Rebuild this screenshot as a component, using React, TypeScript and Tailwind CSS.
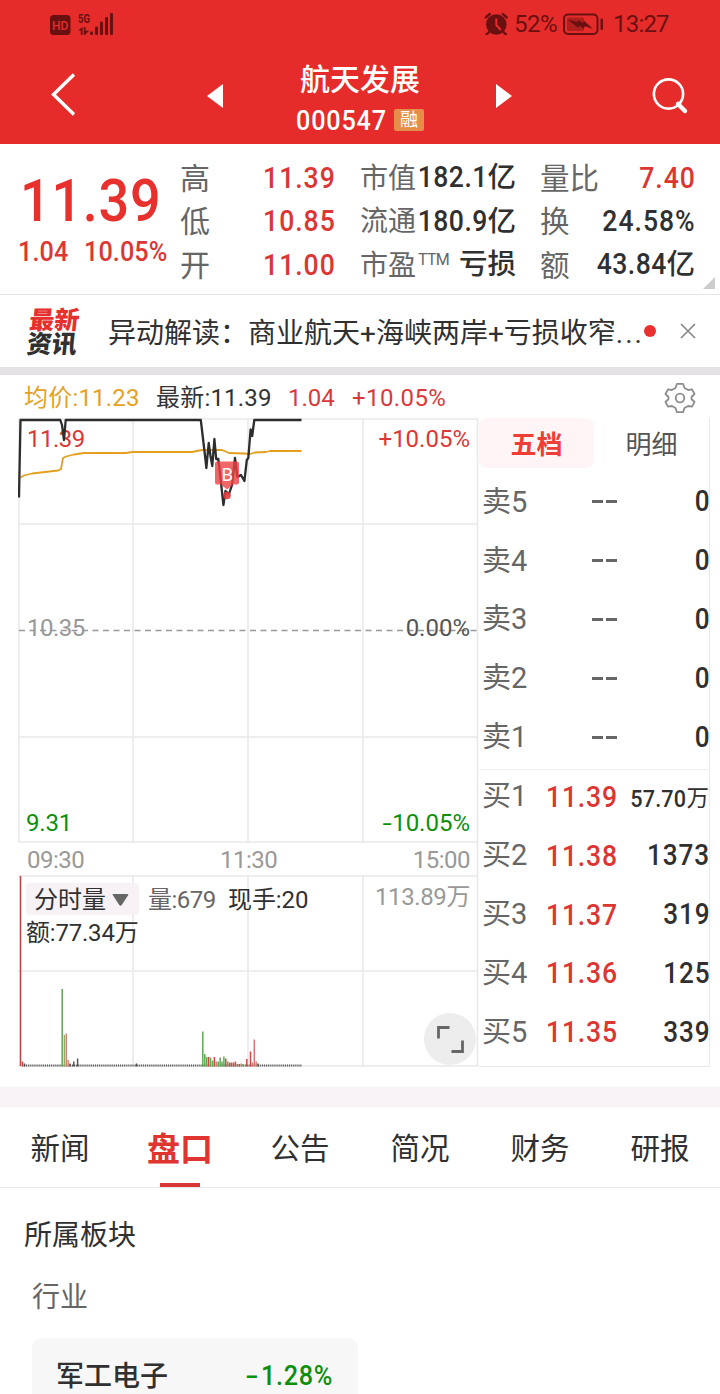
import React from 'react';
import clsx from 'clsx';

const quoteColumns = [
  {
    className: 'w-[155px]',
    labelClass: 'text-[30px]',
    rows: [
      { label: '高', value: '11.39', up: true },
      { label: '低', value: '10.85', up: true },
      { label: '开', value: '11.00', up: true },
    ],
  },
  {
    className: 'ml-[25px] w-[156px]',
    labelClass: 'text-[28px]',
    rows: [
      { label: '市值', value: '182.1', unit: '亿' },
      { label: '流通', value: '180.9', unit: '亿' },
      { label: '市盈', sup: 'TTM', unit: '亏损' },
    ],
  },
  {
    className: 'ml-[24px] w-[155px]',
    labelClass: 'text-[29.5px]',
    rows: [
      { label: '量比', value: '7.40', up: true },
      { label: '换', value: '24.58%' },
      { label: '额', value: '43.84', unit: '亿' },
    ],
  },
] as {
  className: string;
  labelClass: string;
  rows: { label: string; value?: string; unit?: string; sup?: string; up?: boolean }[];
}[];

const sells = ['卖5', '卖4', '卖3', '卖2', '卖1'];

const buys = [
  { label: '买1', price: '11.39', volume: '57.70', unit: '万' },
  { label: '买2', price: '11.38', volume: '1373' },
  { label: '买3', price: '11.37', volume: '319' },
  { label: '买4', price: '11.36', volume: '125' },
  { label: '买5', price: '11.35', volume: '339' },
];

const tabs = ['新闻', '盘口', '公告', '简况', '财务', '研报'];

const pricePoints =
  '19,497.5 20.5,420 60.3,420 62,425 64,440 65.7,420 200.8,420 204,447 206.4,468 208.7,443 210.5,456 212.3,466 214.4,439 216.2,459 218.3,459 220.5,478 223.4,505 225.5,491 229,494 232,485 235,458 237.3,477 241,475 244.4,481 246.8,460 248.3,458 250.6,429.5 252.2,436 254.3,420 301.5,420';

const averagePoints =
  '20.5,477.5 24,475.5 32,473.5 45,472 58,470.5 61,469 63,458 66,456.5 74,454.5 84,453 126,453 132,452 192,452 202,450 222,450 229,453 244,453.5 250,454 255,452.5 266,452 270,451 301.5,451';

const GREEN = '#5ea854';
const RED = '#d64545';
const BROWN = '#c9877a';
const DARK = '#555555';

// [x, height, color]
const volumeBars: [number, number, string][] = [
  [22.5, 5, RED], [24.5, 3, DARK], [62.2, 77.5, GREEN], [64.4, 31.5, '#a0a56a'], [66.3, 33, BROWN],
  [68.2, 6.5, BROWN], [70, 3, DARK], [73.8, 5, DARK], [77.6, 8, DARK], [136.5, 3, DARK],
  [202.8, 35, GREEN], [204.8, 12.5, GREEN], [206.7, 9.5, GREEN], [208.6, 9.5, RED], [210.5, 9, GREEN],
  [212.5, 6, GREEN], [214.4, 9.5, RED], [216.3, 5, BROWN], [218.2, 5, GREEN], [220.1, 9, GREEN],
  [222, 5, GREEN], [223.9, 10, GREEN], [225.8, 8, RED], [227.7, 5, GREEN], [229.6, 4, RED],
  [231.5, 4, RED], [233.5, 4, RED], [235.4, 5, RED], [237.3, 2.5, GREEN], [239.2, 2.5, RED],
  [241.1, 3, BROWN], [243, 2.5, GREEN], [246.8, 7.5, RED], [250.5, 15, RED], [252.4, 4, BROWN],
  [254.3, 27, '#db7373'], [256.2, 5, BROWN], [258, 3, DARK],
];

interface NumProps {
  children: React.ReactNode;
  className?: string;
}

// narrow figures for prices and volumes
function Num({ children, className }: NumProps) {
  return <span className={clsx('inline-block scale-x-90 font-medium', className)}>{children}</span>;
}

function StatusBar() {
  return (
    <div className="flex h-12 items-center pl-[50px] pr-[50px] text-[#6b1010]">
      <svg className="overflow-visible" width="65" height="24" viewBox="50 12 65 24" fill="currentColor">
        <rect x="50" y="15" width="20.5" height="20" rx="3.5" />
        <text x="60.2" y="29.5" textAnchor="middle" fontSize="12" fontWeight="500" fill="#e62c2b">HD</text>
        <text x="78" y="22.7" fontSize="12.5" fontWeight="700" textLength="12" lengthAdjust="spacingAndGlyphs">5G</text>
        <path d="M78 30.5 82.6 27v8h-1.8v-4.5zM83.8 27h1.8v3.8h3.6L84.8 35h-1z" />
        <rect x="90" y="31.5" width="3" height="3.5" rx="1" />
        <rect x="95" y="26.5" width="3" height="8.5" rx="1" />
        <rect x="100" y="21.5" width="3" height="13.5" rx="1" />
        <rect x="105" y="17" width="3" height="18" rx="1" />
        <rect x="110" y="13" width="3" height="22" rx="1" />
      </svg>
      <div className="ml-auto flex items-center">
        <svg width="24" height="22" viewBox="484 13 24 22">
          <circle cx="496.3" cy="24.5" r="10.3" fill="currentColor" />
          <path d="m489 32-2.5 2.6M503.5 32l2.5 2.6M485.8 17.5l4-3.5M506.8 17.5l-4-3.5" stroke="currentColor" strokeWidth="2.4" strokeLinecap="round" />
          <path d="M496.3 18.5v6.5l4.5 5" fill="none" stroke="#e62c2b" strokeWidth="2" />
        </svg>
        <span className="ml-[6px] w-[44px] text-[24px] leading-6 tracking-[-0.5px]">52%</span>
        <svg className="ml-[4px]" width="42" height="22" viewBox="562 13 42 22" fill="currentColor">
          <rect x="564" y="14.5" width="33.5" height="19.5" rx="4" fill="none" stroke="currentColor" strokeWidth="2" />
          <rect x="567" y="17.5" width="17" height="13.5" rx="1.5" opacity=".45" />
          <path d="m568 19.5 9.5 2.5 1-2 4.5 3.2.8-2.7 9.2 8.5-8-2.8-1.5 2.3-4-3-1.2 2.5z" />
          <rect x="600.5" y="18.5" width="2.5" height="11.5" rx="1.2" />
        </svg>
        <span className="ml-[9px] w-[57px] whitespace-nowrap text-[24px] leading-6 tracking-[-0.8px]">13:27</span>
      </div>
    </div>
  );
}

function Header() {
  return (
    <header className="h-36 bg-[#e62c2b] text-white">
      <StatusBar />
      <div className="flex h-24 items-center pl-[50px] pr-[31px]">
        <svg className="-mt-1" width="26" height="44" viewBox="0 0 26 44" fill="none" stroke="white" strokeWidth="3.4">
          <path d="M24 2.5 3.5 22.5 24 42.5" />
        </svg>
        <svg className="ml-[131px]" width="17" height="24" viewBox="0 0 17 24">
          <path d="M0 12 16 0v24z" fill="white" />
        </svg>
        <div className="ml-[56px] flex w-[160px] flex-col items-center">
          <h1 className="mt-[5px] text-[30px] font-medium leading-[42px]">航天发展</h1>
          <div className="flex h-[38px] items-center">
            <Num className="-ml-[10px] origin-right pt-[3px] text-[28px] leading-[38px] tracking-[0.9px]">000547</Num>
            <span className="ml-[7px] flex h-[22px] w-[30px] items-center justify-center rounded-[2px] bg-[#e58e48] pt-[1px] text-[18px] leading-none">融</span>
          </div>
        </div>
        <svg className="ml-[56px]" width="17" height="24" viewBox="0 0 17 24">
          <path d="M16 12 0 0v24z" fill="white" />
        </svg>
        <svg className="ml-auto" width="37" height="37" viewBox="0 0 37 37" fill="none" stroke="white">
          <circle cx="16.5" cy="16" r="14.6" strokeWidth="2.6" />
          <path d="m26 26 7 7" strokeWidth="4.5" strokeLinecap="round" />
        </svg>
      </div>
    </header>
  );
}

function QuotePanel() {
  return (
    <section className="relative flex h-[151px] border-b border-[#e3e3e3] pt-[12px]">
      <div className="w-[180px] pl-[18px] text-[#e8302c]">
        <div className="mt-[15px] pl-[2px]">
          <Num className="origin-left text-[60px] leading-[60px] tracking-[0.8px]">11.39</Num>
        </div>
        <div className="flex gap-[10px] whitespace-nowrap pt-[5px] text-[28px] leading-[32px] tracking-[0.1px] text-[#db3835]">
          <Num className="origin-left">1.04</Num>
          <Num className="origin-left">10.05%</Num>
        </div>
      </div>
      {quoteColumns.map((column) => (
        <div key={column.rows[0].label} className={column.className}>
          {column.rows.map((row) => (
            <div key={row.label} className="flex h-[43.5px] items-center justify-between whitespace-nowrap">
              <span className={clsx('flex pt-[2px] leading-[40px] text-[#666]', column.labelClass)}>
                {row.label}
                {row.sup && (
                  <span className="-mt-[6px] ml-[2px] w-[30px] text-[16px] tracking-[-0.8px]">{row.sup}</span>
                )}
              </span>
              <span className={clsx('text-[29.5px] font-medium leading-[40px]', row.up ? 'text-[#dc3633]' : 'text-[#303030]')}>
                {row.value && (
                  <Num className={clsx('-ml-4 origin-right', row.unit ? 'tracking-[0.5px]' : '-mr-[1px] tracking-[1.1px]')}>
                    {row.value}
                  </Num>
                )}
                {row.unit && <span className="text-[28.5px]">{row.unit}</span>}
              </span>
            </div>
          ))}
        </div>
      ))}
      <svg className="absolute bottom-[5px] right-[5px]" width="12" height="12" viewBox="0 0 12 12">
        <path d="M12 0v12H0z" fill="#ccc" />
      </svg>
    </section>
  );
}

function NewsBar() {
  return (
    <section className="flex h-[72px] items-center whitespace-nowrap">
      <div className="ml-[28px] mt-[3px] w-[52px] -skew-x-6 text-[25px] font-black leading-[24px]">
        <div className="text-[#e5302e]">最新</div>
        <div className="text-[#303030]">资讯</div>
      </div>
      <p className="ml-[28px] w-[537px] pt-[6px] text-[28px] leading-[40px] text-[#303030]">
        异动解读：商业航天+海峡两岸+亏损收窄<span className="tracking-[2px]">...</span>
      </p>
      <span className="-ml-px h-3 w-3 rounded-full bg-[#e8302f]" />
      <svg className="ml-[24px]" width="16" height="16" viewBox="0 0 16 16" stroke="#888" strokeWidth="1.7">
        <path d="m1 1 14 14M15 1 1 15" />
      </svg>
    </section>
  );
}

function ChartSummary() {
  return (
    <div className="flex h-[43px] items-center whitespace-nowrap pl-[24px] pr-[24px] pt-[2px] text-[24px]">
      <span className="w-[132px] tracking-[0.2px] text-[#e5a11f]">均价:11.23</span>
      <span className="w-[132px] tracking-[0.2px] text-[#333]">最新:11.39</span>
      <span className="w-[64px] text-[#d93a3a]">1.04</span>
      <span className="tracking-[0.4px] text-[#d93a3a]">+10.05%</span>
      <svg className="ml-auto" width="32" height="32" viewBox="-16 -16 32 32" fill="none" stroke="#8c8c8c" strokeWidth="1.8" strokeLinejoin="round">
        <path d="M-3-14.2H3L4.5-10 8.2-8 12-8.7 14.5-4 11.5-1V1L14.5 4 12 8.7 8.2 8 4.5 10 3 14.2H-3L-4.5 10-8.2 8-12 8.7-14.5 4-11.5 1V-1L-14.5-4-12-8.7-8.2-8-4.5-10Z" />
        <circle r="4.3" />
      </svg>
    </div>
  );
}

function TrendChart() {
  return (
    <div className="relative ml-[18px] h-[649px] w-[461px] text-[24px] leading-[28px] tracking-[-0.5px]">
      <svg className="block" width="461" height="649" viewBox="18 418 461 649" fill="none">
        <g stroke="#e9e9e9" strokeWidth="1.6">
          <path d="M18 419H478M18 524H478M18 737H478M18 842H478M18 876H478M18 971H478M18 1066H478" />
          <path d="M19 419V842M133 419V842M248 419V842M363 419V842M133 876V1066M248 876V1066M363 876V1066M477.5 419V1066" />
        </g>
        <path d="M19 630.5H478" stroke="#999" strokeWidth="1.5" strokeDasharray="6 4.5" />
        <path d="M20.5 876V1066" stroke="#b8474b" strokeWidth="1.6" />
        <path d="M22 1065.5H302" stroke="#555" strokeWidth="1.8" strokeDasharray="1.1 .82" />
        {volumeBars.map(([x, height, color]) => (
          <rect key={x} x={x - 0.75} y={1066.5 - height} width="1.5" height={height} fill={color} />
        ))}
      </svg>

      <span className="absolute left-[9px] top-[7px] text-[#db3835]">11.39</span>
      <span className="absolute right-[9px] top-[7px] tracking-[0px] text-[#db3835]">+10.05%</span>
      <span className="absolute left-[9px] top-[196px] text-[#999]">10.35</span>
      <span className="absolute right-[9px] top-[196px] tracking-[0px] text-[#555]">0.00%</span>
      <span className="absolute left-[8px] top-[391px] tracking-[-0.2px] text-[#0c900c]">9.31</span>
      <span className="absolute right-[9px] top-[391px] text-[#0c900c]">
        <span className="mr-[1px] inline-block origin-right scale-x-140">-</span>
        <span className="tracking-[0px]">10.05%</span>
      </span>
      <span className="absolute left-[9px] top-[428px] text-[#999]">09:30</span>
      <span className="absolute left-[202px] top-[428px] text-[#999]">11:30</span>
      <span className="absolute right-[9px] top-[428px] text-[#999]">15:00</span>
      <span className="absolute right-[9px] top-[465px] tracking-[-0.4px] text-[#999]">113.89万</span>

      <div className="absolute left-[8px] top-[465px] flex items-center whitespace-nowrap text-[#303030]">
        <button className="flex h-8 w-[113px] items-center rounded bg-[#f5f1f5]/90 pl-[8px] pt-[2px] tracking-normal">
          分时量
          <svg className="ml-[6px]" width="17" height="12" viewBox="0 0 17 12">
            <path d="M1.5 0h14q1.5 0 .6 1.3L9.7 11q-1.2 1.4-2.4 0L.9 1.3Q0 0 1.5 0" fill="#666" />
          </svg>
        </button>
        <span className="ml-[9px] w-[80px] pt-[2px] text-[#666]">量:679</span>
        <span className="pt-[2px] tracking-[-0.1px]">现手:20</span>
      </div>
      <span className="absolute left-[8px] top-[501px] tracking-[-0.2px] text-[#303030]">额:77.34万</span>

      <svg className="absolute left-0 top-0" width="461" height="110" viewBox="18 418 461 110" fill="none" strokeLinejoin="round">
        <polyline points={averagePoints} stroke="#e3a01e" strokeWidth="1.8" />
        <polyline points={pricePoints} stroke="#2d2d2d" strokeWidth="2.3" />
        <path d="M217 461.5h20q2 0 2 2v19q0 2-2 2h-4l-6 5-6-5h-4q-2 0-2-2v-19q0-2 2-2" fill="#ee4040" opacity=".8" />
        <circle cx="227" cy="495.5" r="3.8" fill="#e23b3b" opacity=".9" />
        <text x="227.3" y="480.6" textAnchor="middle" fontSize="18.5" letterSpacing="0" fill="white">B</text>
      </svg>

      <button className="absolute bottom-[2px] right-[3px] flex h-[52px] w-[52px] items-center justify-center rounded-full bg-[#ededed]">
        <svg width="27" height="27" viewBox="0 0 27 27" fill="none" stroke="#666" strokeWidth="2.8">
          <path d="M1.5 12.5v-11h11M25.5 14.5v11h-11" />
        </svg>
      </button>
    </div>
  );
}

function OrderBook() {
  return (
    <div className="h-[649px] w-[231px] border-b border-r border-[#e9e9e9]">
      <div className="flex h-[54px] text-[26px]">
        <button className="h-[50px] w-[115px] rounded-lg bg-[#fff5f6] pt-[4px] font-bold text-[#ee3e35]">五档</button>
        <button className="h-[50px] w-[115px] pt-[4px] text-[#555]">明细</button>
      </div>
      <div className="border-b border-[#efefef] pb-[3px] text-[29px]">
        {sells.map((label) => (
          <div key={label} className="flex h-[58.9px] items-center pl-[3px]">
            <span className="w-[110px] pt-[2px] text-[#666]">{label}</span>
            <span className="flex gap-[3px] pt-px">
              <i className="h-[3px] w-[11px] bg-[#666]" />
              <i className="h-[3px] w-[11px] bg-[#666]" />
            </span>
            <Num className="ml-auto origin-right pt-px text-[#303030]">0</Num>
          </div>
        ))}
      </div>
      <div className="-mt-1 text-[29px]">
        {buys.map(({ label, price, volume, unit }) => (
          <div key={label} className="flex h-[58.9px] items-center whitespace-nowrap pl-[3px]">
            <span className="w-[64px] pt-[2px] text-[#666]">{label}</span>
            <Num className="origin-left pt-[2px] text-[29.5px] tracking-[0.9px] text-[#dc3633]">{price}</Num>
            {unit ? (
              <span className="-ml-6 flex flex-1 items-center justify-end pt-[6px] text-[#303030]">
                <Num className="origin-right text-[24px] tracking-[0.2px]">{volume}</Num>
                <span className="text-[22.5px]">{unit}</span>
              </span>
            ) : (
              <Num className="-mr-px ml-auto origin-right pt-[2px] tracking-[1px] text-[#303030]">{volume}</Num>
            )}
          </div>
        ))}
      </div>
    </div>
  );
}

function SectionTabs() {
  return (
    <nav className="grid h-[81px] grid-cols-6 border-b border-[#e9e9e9]">
      {tabs.map((tab) => {
        const active = tab === '盘口';
        return (
          <button
            key={tab}
            className={clsx(
              'relative flex items-center justify-center pt-[5px]',
              active ? 'text-[33px] font-bold text-[#e03431]' : 'text-[29.5px] text-[#303030]'
            )}
          >
            {tab}
            {active && <span className="absolute bottom-0 h-1 w-10 bg-[#d93735]" />}
          </button>
        );
      })}
    </nav>
  );
}

export default function App() {
  return (
    <div className="h-[1394px] w-[720px] overflow-hidden bg-white font-['Roboto','Noto_Sans_CJK_SC',sans-serif]">
      <Header />
      <QuotePanel />
      <NewsBar />
      <div className="h-2 bg-[#e5e1e5]" />
      <ChartSummary />
      <div className="flex">
        <TrendChart />
        <OrderBook />
      </div>
      <div className="mt-5 h-5 bg-[#f7f3f7]" />
      <SectionTabs />
      <section className="text-[28px] leading-[40px]">
        <h2 className="pl-[24px] pt-[28px] text-[#303030]">所属板块</h2>
        <h3 className="pl-[32px] pt-[22px] text-[#666]">行业</h3>
        <div className="ml-[32px] mt-[20px] flex h-[80px] w-[326px] justify-between rounded-[10px] bg-[#f7f7f7] pl-[24px] pr-[25px] pt-[19px]">
          <span className="font-medium text-[#303030]">军工电子</span>
          <span className="-mt-px text-[#0c900c]">
            <span className="-mr-[6px] inline-block origin-right scale-x-140 font-medium">-</span>
            <Num className="origin-right tracking-[0.8px]">1.28%</Num>
          </span>
        </div>
      </section>
    </div>
  );
}
